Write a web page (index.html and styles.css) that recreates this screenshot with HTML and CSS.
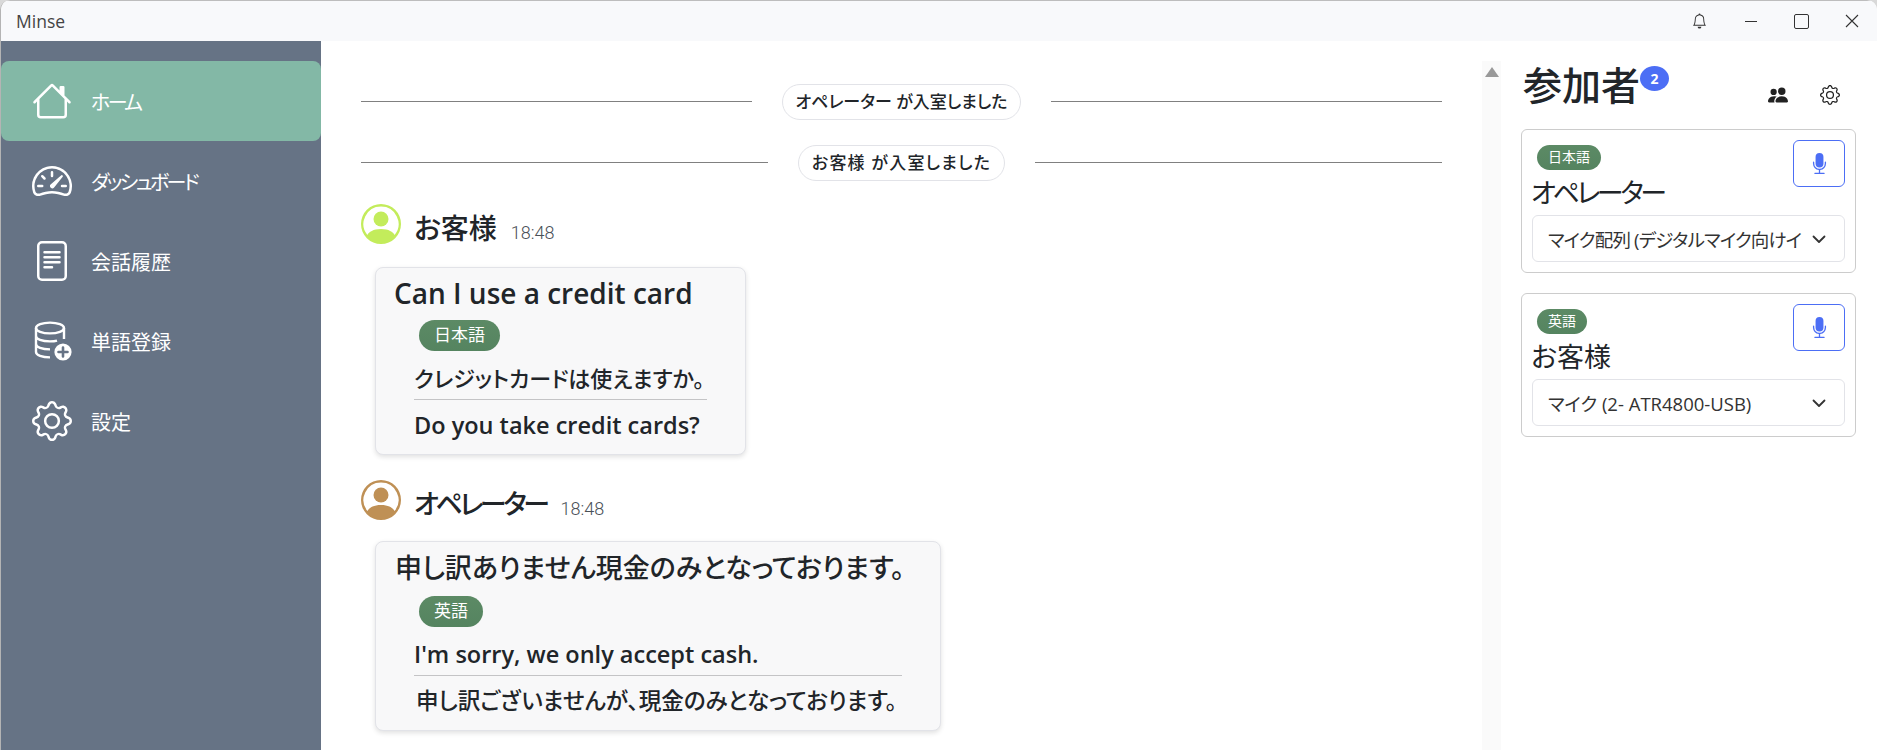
FILE: index.html

```html
<!DOCTYPE html>
<html lang="ja">
<head>
  <meta charset="UTF-8">
  <title>Minse</title>
  <link rel="stylesheet" href="styles.css">
</head>
<body>
  <svg class="defs" width="0" height="0">
    <symbol id="i-gear" viewBox="0 0 16 16">
      <path d="M8 4.754a3.246 3.246 0 1 0 0 6.492 3.246 3.246 0 0 0 0-6.492zM5.754 8a2.246 2.246 0 1 1 4.492 0 2.246 2.246 0 0 1-4.492 0z"/>
      <path d="M9.796 1.343c-.527-1.79-3.065-1.79-3.592 0l-.094.319a.873.873 0 0 1-1.255.52l-.292-.16c-1.64-.892-3.433.902-2.54 2.541l.159.292a.873.873 0 0 1-.52 1.255l-.319.094c-1.79.527-1.79 3.065 0 3.592l.319.094a.873.873 0 0 1 .52 1.255l-.16.292c-.892 1.64.901 3.434 2.541 2.54l.292-.159a.873.873 0 0 1 1.255.52l.094.319c.527 1.79 3.065 1.79 3.592 0l.094-.319a.873.873 0 0 1 1.255-.52l.292.16c1.64.893 3.434-.902 2.54-2.541l-.159-.292a.873.873 0 0 1 .52-1.255l.319-.094c1.79-.527 1.79-3.065 0-3.592l-.319-.094a.873.873 0 0 1-.52-1.255l.16-.292c.893-1.64-.902-3.433-2.541-2.54l-.292.159a.873.873 0 0 1-1.255-.52l-.094-.319zm-2.633.283c.246-.835 1.428-.835 1.674 0l.094.319a1.873 1.873 0 0 0 2.693 1.115l.291-.16c.764-.415 1.6.42 1.184 1.185l-.159.292a1.873 1.873 0 0 0 1.116 2.692l.318.094c.835.246.835 1.428 0 1.674l-.319.094a1.873 1.873 0 0 0-1.115 2.693l.16.291c.415.764-.42 1.6-1.185 1.184l-.291-.159a1.873 1.873 0 0 0-2.693 1.116l-.094.318c-.246.835-1.428.835-1.674 0l-.094-.319a1.873 1.873 0 0 0-2.692-1.115l-.292.16c-.764.415-1.6-.42-1.184-1.185l.159-.291A1.873 1.873 0 0 0 1.945 8.93l-.319-.094c-.835-.246-.835-1.428 0-1.674l.319-.094A1.873 1.873 0 0 0 3.06 4.377l-.16-.292c-.415-.764.42-1.6 1.185-1.184l.292.159a1.873 1.873 0 0 0 2.692-1.115l.094-.319z"/>
    </symbol>
    <symbol id="i-mic" viewBox="0 0 16 16">
      <path d="M5 3a3 3 0 0 1 6 0v5a3 3 0 0 1-6 0V3z"/>
      <path d="M3.5 6.5A.5.5 0 0 1 4 7v1a4 4 0 0 0 8 0V7a.5.5 0 0 1 1 0v1a5 5 0 0 1-4.5 4.975V15h3a.5.5 0 0 1 0 1h-7a.5.5 0 0 1 0-1h3v-2.025A5 5 0 0 1 3 8V7a.5.5 0 0 1 .5-.5z"/>
    </symbol>
    <symbol id="i-person" viewBox="0 0 16 16">
      <path d="M11 6a3 3 0 1 1-6 0 3 3 0 0 1 6 0z"/>
      <path fill-rule="evenodd" d="M0 8a8 8 0 1 1 16 0A8 8 0 0 1 0 8zm8-7a7 7 0 0 0-5.468 11.37C3.242 11.226 4.805 10 8 10s4.757 1.225 5.468 2.37A7 7 0 0 0 8 1z"/>
    </symbol>
    <symbol id="i-chevron" viewBox="0 0 16 16">
      <path d="M2.5 5.5 8 11l5.5-5.5" fill="none" stroke="currentColor" stroke-width="1.8" stroke-linecap="round" stroke-linejoin="round"/>
    </symbol>
  </svg>

  <div class="window">
    <header class="titlebar">
      <span class="app-name">Minse</span>
      <div class="win-buttons">
        <svg class="win-bell" viewBox="0 0 16 16" fill="currentColor"><path d="M8 16a2 2 0 0 0 2-2H6a2 2 0 0 0 2 2zM8 1.918l-.797.161A4.002 4.002 0 0 0 4 6c0 .628-.134 2.197-.459 3.742-.16.767-.376 1.566-.663 2.258h10.244c-.287-.692-.502-1.49-.663-2.258C12.134 8.197 12 6.628 12 6a4.002 4.002 0 0 0-3.203-3.92L8 1.917zM14.22 12c.223.447.481.801.78 1H1c.299-.199.557-.553.78-1C2.68 10.2 3 6.88 3 6c0-2.42 1.72-4.44 4.005-4.901a1 1 0 1 1 1.99 0A5.002 5.002 0 0 1 13 6c0 .88.32 4.2 1.22 6z"/></svg>
        <span class="win-min"></span>
        <span class="win-max"></span>
        <svg class="win-close" viewBox="0 0 14 14"><path d="M1 1l12 12M13 1 1 13" stroke="currentColor" stroke-width="1.1" fill="none"/></svg>
      </div>
    </header>

    <div class="content">
      <nav class="sidebar">
        <a class="nav-item active">
          <svg class="nav-icon" viewBox="0 0 16 16" fill="currentColor"><path d="M8.707 1.5a1 1 0 0 0-1.414 0L.646 8.146a.5.5 0 0 0 .708.708L2 8.207V13.5A1.5 1.5 0 0 0 3.5 15h9a1.5 1.5 0 0 0 1.5-1.5V8.207l.646.647a.5.5 0 0 0 .708-.708L13 5.793V2.5a.5.5 0 0 0-.5-.5h-1a.5.5 0 0 0-.5.5v1.293L8.707 1.5ZM13 7.207V13.5a.5.5 0 0 1-.5.5h-9a.5.5 0 0 1-.5-.5V7.207l5-5 5 5Z"/></svg>
          <span class="kana">ホーム</span>
        </a>
        <a class="nav-item">
          <svg class="nav-icon" viewBox="0 0 16 16" fill="currentColor"><path d="M8 4a.5.5 0 0 1 .5.5V6a.5.5 0 0 1-1 0V4.5A.5.5 0 0 1 8 4zM3.732 5.732a.5.5 0 0 1 .707 0l.915.914a.5.5 0 1 1-.708.708l-.914-.915a.5.5 0 0 1 0-.707zM2 10a.5.5 0 0 1 .5-.5h1.586a.5.5 0 0 1 0 1H2.5A.5.5 0 0 1 2 10zm9.5 0a.5.5 0 0 1 .5-.5h1.5a.5.5 0 0 1 0 1H12a.5.5 0 0 1-.5-.5zm.754-4.246a.389.389 0 0 0-.527-.02L7.547 9.31a.91.91 0 1 0 1.302 1.258l3.434-4.297a.389.389 0 0 0-.029-.518z"/><path fill-rule="evenodd" d="M0 10a8 8 0 1 1 15.547 2.661c-.442 1.253-1.845 1.588-2.932 1.25C11.309 13.488 9.475 13 8 13c-1.474 0-3.31.488-4.615.911-1.087.338-2.49.003-2.932-1.25A7.988 7.988 0 0 1 0 10zm8-7a7 7 0 0 0-6.603 9.329c.203.575.923.876 1.68.63C4.397 12.533 6.358 12 8 12s3.604.532 4.923.96c.757.245 1.477-.056 1.68-.631A7 7 0 0 0 8 3z"/></svg>
          <span class="kana">ダッシュボード</span>
        </a>
        <a class="nav-item">
          <svg class="nav-icon" viewBox="0 0 16 16" fill="currentColor"><path d="M5 4a.5.5 0 0 0 0 1h6a.5.5 0 0 0 0-1H5zm-.5 2.5A.5.5 0 0 1 5 6h6a.5.5 0 0 1 0 1H5a.5.5 0 0 1-.5-.5zM5 8a.5.5 0 0 0 0 1h6a.5.5 0 0 0 0-1H5zm0 2a.5.5 0 0 0 0 1h3a.5.5 0 0 0 0-1H5z"/><path d="M2 2a2 2 0 0 1 2-2h8a2 2 0 0 1 2 2v12a2 2 0 0 1-2 2H4a2 2 0 0 1-2-2V2zm10-1H4a1 1 0 0 0-1 1v12a1 1 0 0 0 1 1h8a1 1 0 0 0 1-1V2a1 1 0 0 0-1-1z"/></svg>
          <span>会話履歴</span>
        </a>
        <a class="nav-item">
          <svg class="nav-icon" viewBox="0 0 40 40">
            <g fill="none" stroke="currentColor" stroke-width="2.4">
              <ellipse cx="18" cy="7" rx="14" ry="5.4"/>
              <path d="M4 7v24c0 3 6 5.4 14 5.4M32 7v11M4 15c0 3 6 5.4 14 5.4 2 0 5-.2 7-.8M4 23c0 3 6 5.4 14 5.4"/>
            </g>
            <circle cx="31" cy="31" r="8.6" fill="currentColor"/>
            <path d="M31 26.5v9M26.5 31h9" stroke="#667385" stroke-width="2.6" stroke-linecap="round"/>
          </svg>
          <span>単語登録</span>
        </a>
        <a class="nav-item">
          <svg class="nav-icon" fill="currentColor"><use href="#i-gear"/></svg>
          <span>設定</span>
        </a>
      </nav>

      <main class="chat">
        <div class="notice">
          <span class="notice-line"></span>
          <span class="notice-pill">オペレーター が入室しました</span>
          <span class="notice-line"></span>
        </div>
        <div class="notice">
          <span class="notice-line"></span>
          <span class="notice-pill notice-guest">お客様 が入室しました</span>
          <span class="notice-line"></span>
        </div>

        <section class="message">
          <div class="msg-head">
            <svg class="avatar avatar-guest"><use href="#i-person"/></svg>
            <span class="msg-name">お客様</span>
            <span class="msg-time">18:48</span>
          </div>
          <div class="bubble">
            <div class="bubble-title latin">Can I use a credit card</div>
            <span class="lang-badge">日本語</span>
            <div class="bubble-text">クレジットカードは使えますか。</div>
            <hr class="bubble-rule">
            <div class="bubble-text latin">Do you take credit cards?</div>
          </div>
        </section>

        <section class="message">
          <div class="msg-head">
            <svg class="avatar avatar-operator"><use href="#i-person"/></svg>
            <span class="msg-name kana">オペレーター</span>
            <span class="msg-time">18:48</span>
          </div>
          <div class="bubble">
            <div class="bubble-title ja">申し訳ありません現金のみとなっております。</div>
            <span class="lang-badge">英語</span>
            <div class="bubble-text latin">I'm sorry, we only accept cash.</div>
            <hr class="bubble-rule">
            <div class="bubble-text wide">申し訳ございませんが、現金のみとなっております。</div>
          </div>
        </section>
      </main>

      <div class="scrollbar"><span class="scroll-up"></span></div>

      <aside class="panel">
        <div class="panel-head">
          <h2 class="panel-title">参加者</h2>
          <span class="count">2</span>
          <div class="panel-tools">
            <svg class="tool-icon" viewBox="0 0 16 16" fill="currentColor"><path d="M7 14s-1 0-1-1 1-4 5-4 5 3 5 4-1 1-1 1H7Zm4-6a3 3 0 1 0 0-6 3 3 0 0 0 0 6Zm-5.784 6A2.238 2.238 0 0 1 5 13c0-1.355.68-2.75 1.936-3.72A6.325 6.325 0 0 0 5 9c-4 0-5 3-5 4s1 1 1 1h4.216ZM4.5 8a2.5 2.5 0 1 0 0-5 2.5 2.5 0 0 0 0 5Z"/></svg>
            <svg class="tool-icon" fill="currentColor"><use href="#i-gear"/></svg>
          </div>
        </div>

        <div class="card">
          <button class="mic-btn"><svg class="mic-icon" fill="currentColor"><use href="#i-mic"/></svg></button>
          <span class="card-badge">日本語</span>
          <div class="card-name kana">オペレーター</div>
          <div class="device">
            <span class="device-name kana">マイク配列 (デジタルマイク向けイ</span>
            <svg class="chevron"><use href="#i-chevron"/></svg>
          </div>
        </div>

        <div class="card">
          <button class="mic-btn"><svg class="mic-icon" fill="currentColor"><use href="#i-mic"/></svg></button>
          <span class="card-badge">英語</span>
          <div class="card-name">お客様</div>
          <div class="device">
            <span class="device-name">マイク (2- ATR4800-USB)</span>
            <svg class="chevron"><use href="#i-chevron"/></svg>
          </div>
        </div>
      </aside>
    </div>
  </div>
</body>
</html>
```

FILE: styles.css

```css
html, body {
  margin: 0;
  padding: 0;
  height: 100%;
  overflow: hidden;
  background: #d9d9d9;
}
body {
  font-family: "Open Sans", "Noto Sans CJK JP", sans-serif;
  font-feature-settings: "palt";
  color: #212529;
}
.defs {
  position: absolute;
}
.window {
  height: 750px;
  box-sizing: border-box;
  border-left: 1px solid #b4b4b4;
  background: #fff;
  border-radius: 10px 10px 0 0;
  overflow: hidden;
  display: flex;
  flex-direction: column;
}

/* title bar */
.titlebar {
  height: 41px;
  flex: none;
  box-sizing: border-box;
  border-top: 1px solid #bdbdbd;
  background: #f8f9fb;
  display: flex;
  justify-content: space-between;
  align-items: center;
  padding-left: 15px;
}
.app-name {
  font-size: 17.5px;
  color: #444;
}
.win-buttons {
  display: flex;
  align-items: center;
  color: #333;
  padding-right: 18px;
}
.win-bell {
  width: 15px;
  height: 16px;
  margin-right: 38px;
}
.win-min {
  width: 12px;
  height: 1px;
  background: #333;
  margin-right: 37px;
}
.win-max {
  width: 13px;
  height: 13px;
  border: 1px solid #333;
  border-radius: 2px;
  margin-right: 36px;
}
.win-close {
  width: 14px;
  height: 14px;
}

.content {
  flex: 1;
  display: flex;
  min-height: 0;
}

/* sidebar */
.sidebar {
  width: 320px;
  flex: none;
  background: #667385;
  padding-top: 20px;
  box-sizing: border-box;
}
.nav-item {
  height: 80px;
  display: flex;
  align-items: center;
  color: #fff;
  font-size: 20px;
  padding-left: 31px;
  border-radius: 8px;
}
.nav-item.active {
  background: #83b8a6;
}
.nav-icon {
  width: 40px;
  height: 40px;
  margin-right: 19px;
}
.nav-item .kana {
  letter-spacing: -2.6px;
}

/* chat */
.chat {
  flex: 1;
  min-width: 0;
  padding: 18px 40px 0 40px;
}
.notice {
  display: flex;
  align-items: center;
  height: 36px;
  margin-top: 25px;
}
.notice-line {
  flex: 1;
  height: 1px;
  margin-top: -2px;
  background: #808080;
}
.notice-pill {
  margin: 0 30px;
  height: 36px;
  box-sizing: border-box;
  line-height: 33px;
  padding: 0 13px;
  border: 1px solid #e2e3e8;
  border-radius: 18px;
  font-size: 17px;
  font-weight: 500;
}
.notice-guest {
  letter-spacing: 1.2px;
}
.message {
  margin-top: 23px;
}
.msg-head {
  display: flex;
  align-items: center;
  height: 40px;
}
.avatar {
  width: 40px;
  height: 40px;
  margin-right: 13px;
}
.avatar-guest {
  fill: #c3ec5b;
}
.avatar-operator {
  fill: #bf9055;
}
.msg-name {
  font-size: 28px;
  font-weight: 500;
  line-height: 40px;
  padding-top: 8px;
}
.msg-name.kana {
  font-size: 27px;
  letter-spacing: -3.4px;
}
.msg-time {
  font-family: Roboto, sans-serif;
  font-size: 18px;
  font-weight: 300;
  color: #495057;
  margin-left: 14px;
  padding-top: 16px;
}
.bubble {
  display: inline-block;
  vertical-align: top;
  margin: 23px 0 2px 14px;
  padding: 5px 38px 11px 19px;
  background: #f8f8f9;
  border: 1px solid #e2e3e8;
  border-radius: 8px;
  box-shadow: 0 2px 5px rgba(0, 0, 0, 0.12);
}
.message + .message .bubble {
  margin-top: 21px;
}
.bubble-title {
  font-size: 27px;
  font-weight: 500;
  line-height: 40px;
  margin-right: -8px;
}
.bubble-title.latin {
  font-size: 28px;
  font-weight: 600;
  margin-left: -1px;
}
.bubble-title.ja {
  line-height: 42px;
}
.lang-badge {
  display: block;
  width: fit-content;
  margin: 7px 0 0 24px;
  padding: 0 15px;
  height: 31px;
  line-height: 30px;
  font-size: 17px;
  color: #fff;
  border-radius: 16px;
  background: linear-gradient(#5c8a65, #558460);
}
.bubble-text {
  font-size: 22px;
  font-weight: 500;
  line-height: 36px;
  margin: 9px 3px 0 19px;
}
.bubble-text.latin {
  font-size: 23.5px;
  font-weight: 600;
}
.bubble-text.wide {
  font-size: 22.6px;
  margin-left: 21px;
  margin-right: 5px;
}
.bubble-rule {
  border: 0;
  height: 1px;
  background: #c4c4c6;
  margin: 3px 0 0 19px;
}
.bubble-rule + .bubble-text {
  margin-top: 7px;
}

/* scrollbar */
.scrollbar {
  width: 19px;
  flex: none;
  margin-top: 20px;
  background: #fafafa;
  display: flex;
  justify-content: center;
  padding-top: 6px;
  box-sizing: border-box;
}
.scroll-up {
  width: 0;
  height: 0;
  border-left: 7px solid transparent;
  border-right: 7px solid transparent;
  border-bottom: 10px solid #999;
}

/* participants */
.panel {
  width: 376px;
  flex: none;
  box-sizing: border-box;
  padding: 20px 21px 0 20px;
}
.panel-head {
  display: flex;
  align-items: flex-start;
  height: 68px;
}
.panel-title {
  margin: 0 0 0 2px;
  font-size: 39px;
  font-weight: 500;
  line-height: 48px;
}
.count {
  margin-top: 5px;
  width: 29px;
  height: 25px;
  border-radius: 50%;
  background: #4c6ef5;
  color: #fff;
  font-size: 14px;
  font-weight: 700;
  line-height: 25px;
  text-align: center;
}
.panel-tools {
  margin-left: auto;
  margin-top: 24px;
  margin-right: 16px;
  display: flex;
  gap: 32px;
  color: #222;
}
.tool-icon {
  width: 20px;
  height: 20px;
}
.card {
  position: relative;
  height: 144px;
  box-sizing: border-box;
  border: 1px solid #ccc;
  border-radius: 6px;
  padding: 15px 10px 0 10px;
  margin-bottom: 20px;
}
.mic-btn {
  position: absolute;
  top: 10px;
  right: 10px;
  width: 52px;
  height: 47px;
  padding: 0;
  background: #fff;
  border: 1px solid #4c6ef5;
  border-radius: 6px;
  color: #4c6ef5;
  display: flex;
  align-items: center;
  justify-content: center;
}
.mic-icon {
  width: 21px;
  height: 21px;
}
.card-badge {
  display: block;
  width: fit-content;
  margin-left: 5px;
  padding: 0 11px;
  height: 25px;
  line-height: 24px;
  font-size: 14px;
  color: #fff;
  border-radius: 13px;
  background: linear-gradient(#5c8a65, #558460);
}
.card-name {
  font-size: 27px;
  line-height: 38px;
  margin: 4px 0 0 -1px;
}
.card-name.kana {
  letter-spacing: -3.4px;
}
.device {
  margin-top: 3px;
  height: 47px;
  box-sizing: border-box;
  border: 1px solid #e2e3e8;
  border-radius: 6px;
  padding: 0 17px 0 15px;
  display: flex;
  align-items: center;
  justify-content: space-between;
  font-size: 18.5px;
  color: #333;
}
.device-name {
  white-space: nowrap;
}
.device-name.kana {
  letter-spacing: -0.8px;
}
.chevron {
  width: 16px;
  height: 16px;
  flex: none;
  color: #333;
}
```
